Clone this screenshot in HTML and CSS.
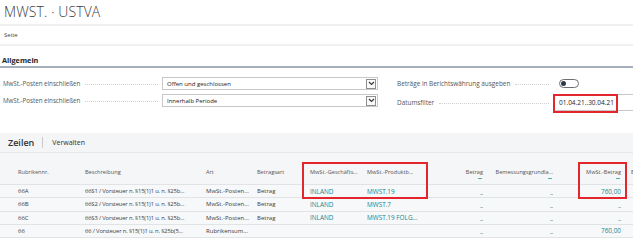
FILE: index.html
```html
<!DOCTYPE html>
<html lang="de">
<head>
<meta charset="utf-8">
<title>MWST. · USTVA</title>
<link rel="stylesheet" href="styles.css">
</head>
<body>
<div class="page">
  <div class="title">MWST. · USTVA</div>
  <div class="rule"></div>
  <div class="pagebar">Seite</div>
  <div class="rule"></div>
  <div class="section-head">Allgemein</div>

  <div class="form">
    <div class="col col-left">
      <div class="field">
        <div class="label"><span>MwSt.-Posten einschließen</span><span class="dots"></span></div>
        <div class="select"><span>Offen und geschlossen</span><span class="chev"><svg width="7" height="5" viewBox="0 0 7 5"><polyline points="1,1 3.5,3.5 6,1" fill="none" stroke="#333" stroke-width="1.1"/></svg></span></div>
      </div>
      <div class="field">
        <div class="label"><span>MwSt.-Posten einschließen</span><span class="dots"></span></div>
        <div class="select"><span>Innerhalb Periode</span><span class="chev"><svg width="7" height="5" viewBox="0 0 7 5"><polyline points="1,1 3.5,3.5 6,1" fill="none" stroke="#333" stroke-width="1.1"/></svg></span></div>
      </div>
    </div>
    <div class="col col-right">
      <div class="field">
        <div class="label rlabel"><span>Beträge in Berichtswährung ausgeben</span><span class="dots"></span></div>
        <div class="toggle-wrap"><span class="toggle"><span class="knob"></span></span></div>
      </div>
      <div class="field field-tall">
        <div class="label rlabel"><span>Datumsfilter</span><span class="dots"></span></div>
        <div class="date-input"><span>01.04.21..30.04.21</span><span class="mark mark-date"></span></div>
      </div>
    </div>
  </div>

  <div class="tabbar">
    <span class="tab tab-active">Zeilen</span>
    <span class="tab-sep"></span>
    <span class="tab">Verwalten</span>
  </div>

  <div class="grid">
    <div class="trow thead">
      <div class="c"></div>
      <div class="c">Rubrikennr.</div>
      <div class="c">Beschreibung</div>
      <div class="c">Art</div>
      <div class="c">Betragsart</div>
      <div class="c">MwSt.-Geschäfts…</div>
      <div class="c">MwSt.-Produktb…</div>
      <div class="c num">Betrag<i class="hd"></i></div>
      <div class="c num">Bemessungsgrundla…<i class="hd"></i></div>
      <div class="c num">MwSt.-Betrag<i class="hd"></i></div>
      <div class="c last">B</div>
    </div>
    <div class="trow">
      <div class="c"></div>
      <div class="c">66A</div>
      <div class="c desc">66S1 / Vorsteuer n. §15(1)1 u. n. §25b…</div>
      <div class="c">MwSt.-Posten…</div>
      <div class="c">Betrag</div>
      <div class="c link">INLAND</div>
      <div class="c link">MWST.19</div>
      <div class="c num link">_</div>
      <div class="c num link">_</div>
      <div class="c num link">760,00</div>
      <div class="c last"></div>
    </div>
    <div class="trow">
      <div class="c"></div>
      <div class="c">66B</div>
      <div class="c desc">66S2 / Vorsteuer n. §15(1)1 u. n. §25b…</div>
      <div class="c">MwSt.-Posten…</div>
      <div class="c">Betrag</div>
      <div class="c link">INLAND</div>
      <div class="c link">MWST.7</div>
      <div class="c num link">_</div>
      <div class="c num link">_</div>
      <div class="c num link">_</div>
      <div class="c last"></div>
    </div>
    <div class="trow">
      <div class="c"></div>
      <div class="c">66C</div>
      <div class="c desc">66S3 / Vorsteuer n. §15(1)1 u. n. §25b…</div>
      <div class="c">MwSt.-Posten…</div>
      <div class="c">Betrag</div>
      <div class="c link">INLAND</div>
      <div class="c link">MWST.19 FOLG…</div>
      <div class="c num link">_</div>
      <div class="c num link">_</div>
      <div class="c num link">_</div>
      <div class="c last"></div>
    </div>
    <div class="trow">
      <div class="c"></div>
      <div class="c">66</div>
      <div class="c desc">66 / Vorsteuer n. §15(1)1 u. n. §25b(5…</div>
      <div class="c">Rubrikensum…</div>
      <div class="c"></div>
      <div class="c"></div>
      <div class="c"></div>
      <div class="c num link">_</div>
      <div class="c num link">_</div>
      <div class="c num link">760,00</div>
      <div class="c last"></div>
    </div>
    <span class="mark mark-a"></span>
    <span class="mark mark-b"></span>
  </div>
</div>
</body>
</html>
```

FILE: styles.css
```css
html, body {
  margin: 0;
  padding: 0;
  background: #ffffff;
}
body {
  font-family: "Open Sans", "Noto Sans", sans-serif;
  color: #333;
  width: 633px;
  height: 241px;
  overflow: hidden;
}
.page {
  width: 633px;
}
.title {
  height: 24px;
  line-height: 24px;
  padding-left: 4px;
  font-size: 14px;
  font-weight: 300;
  color: #3a3a3a;
  letter-spacing: 0.1px;
}
.rule {
  height: 2px;
  background: #f0f0f0;
}
.pagebar {
  height: 18px;
  line-height: 18px;
  padding-left: 4px;
  font-size: 6px;
  color: #444;
}
.section-head {
  height: 12px;
  padding-top: 8px;
  line-height: 12px;
  padding-left: 2px;
  font-size: 7.3px;
  font-weight: 700;
  color: #262626;
  border-bottom: 2px solid #a7aebb;
}
.form {
  display: flex;
  padding: 9px 0 22px 3px;
}
.col {
  display: flex;
  flex-direction: column;
  gap: 4px;
}
.col-left {
  width: 375px;
}
.col-right {
  margin-left: 19px;
  flex: 1;
}
.field {
  display: flex;
  align-items: center;
  height: 13px;
}
.field-tall {
  height: 17px;
}
.label {
  display: flex;
  align-items: center;
  width: 159px;
  font-size: 6.2px;
  color: #555;
  white-space: nowrap;
}
.rlabel {
  width: 156px;
  font-size: 6.4px;
}
.dots {
  flex: 1;
  margin: 1px 4px 0 5px;
  border-bottom: 1px dotted #cfcfcf;
}
.select {
  display: flex;
  align-items: center;
  justify-content: space-between;
  box-sizing: border-box;
  width: 216px;
  height: 13px;
  border: 1px solid #c8c8c8;
  padding-left: 4px;
  padding-right: 1px;
  font-size: 6px;
  color: #222;
}
.chev {
  display: flex;
  align-items: center;
  justify-content: center;
  box-sizing: border-box;
  width: 10px;
  height: 10px;
  border: 1px solid #8e8e8e;
  background: #fafafa;
}
.toggle-wrap {
  display: flex;
  align-items: center;
  padding-left: 6px;
}
.toggle {
  display: flex;
  align-items: center;
  box-sizing: border-box;
  width: 20px;
  height: 9px;
  border: 1px solid #6f6f6f;
  border-radius: 5px;
  padding-left: 1px;
  background: #fff;
}
.knob {
  width: 5px;
  height: 5px;
  border-radius: 50%;
  background: #2d3a4a;
}
.date-input {
  position: relative;
  flex: 1;
  display: flex;
  align-items: center;
  box-sizing: border-box;
  height: 17px;
  border: 1px solid #c8c8c8;
  border-right: none;
  padding-left: 5px;
  font-size: 6.5px;
  color: #1e1e1e;
}
.mark {
  position: absolute;
  box-sizing: border-box;
  border: 2px solid #e2262c;
}
.mark-date {
  left: -1px;
  top: -1px;
  width: 65px;
  height: 19px;
}
.tabbar {
  display: flex;
  align-items: center;
  height: 19px;
  padding-left: 8px;
  background: #f4f5f7;
  border-bottom: 1px solid #e6e7e9;
}
.tab {
  font-size: 7px;
  color: #333;
}
.tab-active {
  font-size: 9px;
  font-weight: 600;
  color: #333;
}
.tab-sep {
  width: 1px;
  height: 11px;
  background: #c9c9c9;
  margin: 0 9px 0 8px;
}
.grid {
  position: relative;
}
.trow {
  display: grid;
  grid-template-columns: 18px 67px 121px 51px 53px 57px 76px 40px 70px 68px 1fr;
  align-items: center;
  height: 12.25px;
  border-bottom: 1px solid #e2e3e5;
  background: #f7f8f9;
  font-size: 6px;
  color: #3c3c3c;
}
.trow.thead {
  height: 31px;
  align-items: end;
  background: #f5f6f8;
  color: #555;
  font-size: 5.6px;
}
.c {
  white-space: nowrap;
  overflow: hidden;
  position: relative;
}
.desc {
  letter-spacing: -0.14px;
  font-size: 5.8px;
}
.thead .c {
  padding-bottom: 8px;
  overflow: visible;
}
.num {
  text-align: right;
}
.last {
  padding-left: 10px;
}
.link {
  color: #23848d;
  font-size: 6.4px;
}
.hd {
  position: absolute;
  right: 1px;
  bottom: 5px;
  width: 4px;
  height: 1px;
  background: #5aa6ad;
}
.mark-a {
  left: 302px;
  top: 9px;
  width: 126px;
  height: 37px;
}
.mark-b {
  left: 578px;
  top: 9px;
  width: 49px;
  height: 37px;
}
```
